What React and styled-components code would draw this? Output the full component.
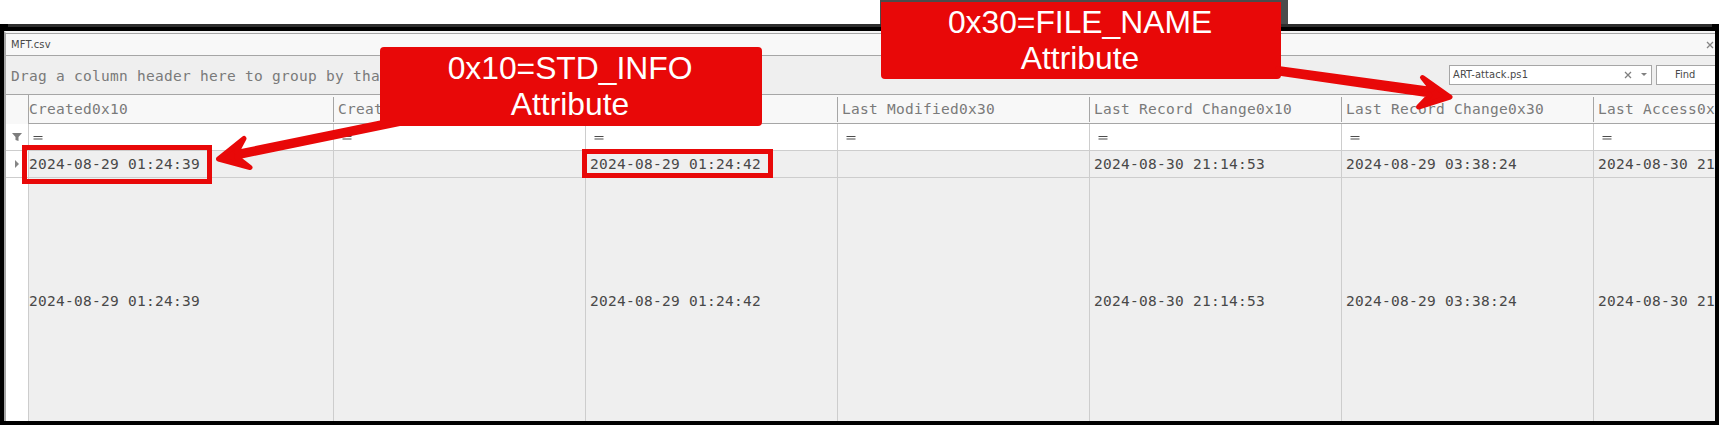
import React from "react";
import styled, { createGlobalStyle } from "styled-components";

const GlobalStyle = createGlobalStyle`
  * { box-sizing: border-box; }
  body { margin: 0; background: #fff; overflow: hidden; }
`;

const RED = "#e80808";
const MONO = `"DejaVu Sans Mono", "Liberation Mono", monospace`;
const UI = `"DejaVu Sans Condensed", "DejaVu Sans", sans-serif`;

const Stage = styled.main`
  position: relative;
  width: 1719px;
  height: 425px;
  padding-top: 24px;
  overflow: hidden;
`;

const Frame = styled.div`
  display: flex;
  flex-direction: column;
  height: 401px;
  padding: 0 4px 4px;
  background: #000;
`;

const FrameEdge = styled.div`
  flex: none;
  height: 3px;
  margin: 0 3px 4px 4px;
  background: #2e2e2e;
`;

const Window = styled.section`
  flex: 1;
  min-height: 0;
  display: flex;
  flex-direction: column;
  border-left: 2px solid #a6a6a6;
  border-top: 2px solid #f4f4f4;
  background: #fff;
  overflow: hidden;
`;

const TitleBar = styled.header`
  flex: none;
  display: flex;
  align-items: center;
  justify-content: space-between;
  height: 23px;
  padding: 0 1px 0 5px;
  border-top: 1px solid #a6a6a6;
  border-bottom: 1px solid #a6a6a6;
  background: #f8f8f8;
  color: #484848;
  font: 11px/20px ${UI};
  letter-spacing: 0.2px;
`;

const GroupPanel = styled.div`
  flex: none;
  display: flex;
  align-items: center;
  height: 39px;
  padding-left: 5px;
  border-bottom: 1px solid #a6a6a6;
  background: #efefef;
`;

const GroupHint = styled.span`
  flex: 1;
  color: #7a7a7a;
  font: 14.5px/20px ${MONO};
  letter-spacing: 0.27px;
  padding-top: 2px;
`;

const SearchBox = styled.div`
  display: flex;
  align-items: center;
  width: 203px;
  height: 20px;
  margin-right: 4px;
  padding: 0 4px 0 3px;
  border: 1px solid #a6a6a6;
  background: #fff;
  color: #484848;
  font: 11px/18px ${UI};
`;

const SearchValue = styled.span`
  flex: 1;
  letter-spacing: 0.12px;
`;

const FindButton = styled.button`
  width: 59px;
  height: 20px;
  padding: 0 0 0 18px;
  border: 1px solid #a6a6a6;
  border-right: 0;
  background: #fff;
  color: #484848;
  text-align: left;
  font: 11px/18px ${UI};
`;

const GridRow = styled.div`
  flex: none;
  display: grid;
  grid-template-columns: 23px 305px repeat(5, 252px) 252px;
  height: ${(p) => p.$height}px;
  border-bottom: ${(p) => (p.$line ? `1px solid ${p.$line}` : "0")};
  background: ${(p) => p.$bg};
`;

const Gutter = styled.div`
  display: flex;
  align-items: center;
  justify-content: center;
  border-right: 1px solid ${(p) => p.$line || "#cdcdcd"};
  background: ${(p) => p.$bg || "#fff"};
`;

const HeaderCell = styled.div`
  margin: 2px 0;
  padding-left: ${(p) => (p.$first ? 0 : 4)}px;
  border-right: 1px solid #a6a6a6;
  color: #7a7a7a;
  font: 14.5px/25px ${MONO};
  letter-spacing: 0.27px;
  white-space: nowrap;
`;

const FilterCell = styled.div`
  display: flex;
  align-items: center;
  padding: 1px 0 0 ${(p) => (p.$first ? 4 : 8)}px;
  border-right: 1px solid #cdcdcd;
`;

const DataCell = styled.div`
  display: flex;
  align-items: center;
  padding: ${(p) => (p.$detail ? 3 : 0)}px 0 0 ${(p) => (p.$first ? 0 : 4)}px;
  border-right: 1px solid #cdcdcd;
  color: #484848;
  font: 14.5px/20px ${MONO};
  letter-spacing: 0.27px;
  white-space: nowrap;
`;

const Highlight = styled.div`
  position: absolute;
  left: ${(p) => p.$x}px;
  top: ${(p) => p.$y}px;
  width: ${(p) => p.$w}px;
  height: ${(p) => p.$h}px;
  border: 5px solid ${RED};
`;

const Arrows = styled.svg`
  position: absolute;
  left: 0;
  top: 0;
  fill: ${RED};
  stroke: ${RED};
  stroke-width: 5;
  stroke-linejoin: round;
`;

const CalloutBacking = styled.div`
  position: absolute;
  left: 880px;
  top: 0;
  width: 408px;
  height: 24px;
  background: #4b4b4b;
`;

const Callout = styled.div`
  position: absolute;
  left: ${(p) => p.$x}px;
  top: ${(p) => p.$y}px;
  width: ${(p) => p.$w}px;
  height: ${(p) => p.$h}px;
  padding: ${(p) => p.$pad}px 2px 0 0;
  border-radius: ${(p) => p.$radius};
  background: ${RED};
  color: #fff;
  text-align: center;
  font: 31.8px/36px "Liberation Sans", Arial, sans-serif;
`;

const CloseIcon = ({ size, color }) => (
  <svg width={size} height={size} viewBox="0 0 8 8" stroke={color} strokeWidth="1.3">
    <path d="M1 1l6 6M7 1L1 7" />
  </svg>
);

const DropIcon = styled.svg`
  margin-left: 9px;
`;

const EqualsIcon = () => (
  <svg width="10" height="4" viewBox="0 0 10 4" fill="#4c4c4c">
    <path d="M0.500 0h9v1h-9zM0.500 2.500h9v1h-9z" />
  </svg>
);

const FilterIcon = () => (
  <svg width="10" height="10" viewBox="0 0 10 10" fill="#7d7d7d">
    <path d="M0 1h10L6.500 5v4L3.500 8V5z" />
  </svg>
);

const RowMarker = () => (
  <svg width="10" height="8" viewBox="0 0 10 8" fill="#858585">
    <path d="M3 0v8l4-4z" />
  </svg>
);

const columns = [
  { title: "Created0x10", value: "2024-08-29 01:24:39" },
  { title: "Created0x30", value: "" },
  { title: "Last Modified0x10", value: "2024-08-29 01:24:42" },
  { title: "Last Modified0x30", value: "" },
  { title: "Last Record Change0x10", value: "2024-08-30 21:14:53" },
  { title: "Last Record Change0x30", value: "2024-08-29 03:38:24" },
  { title: "Last Access0x10", value: "2024-08-30 21:14:53" },
];

export default function App() {
  return (
    <Stage>
      <GlobalStyle />
      <Frame>
        <FrameEdge />
        <Window>
          <TitleBar>
            MFT.csv
            <CloseIcon size={8} color="#858585" />
          </TitleBar>
          <GroupPanel>
            <GroupHint>Drag a column header here to group by that column</GroupHint>
            <SearchBox>
              <SearchValue>ART-attack.ps1</SearchValue>
              <CloseIcon size={8} color="#808080" />
              <DropIcon width="6" height="4" viewBox="0 0 6 4" fill="#808080">
                <path d="M0 0h6L3 3z" />
              </DropIcon>
            </SearchBox>
            <FindButton>Find</FindButton>
          </GroupPanel>
          <GridRow $height={29} $line="#a6a6a6" $bg="#f8f8f8">
            <Gutter $line="#a6a6a6" $bg="#f8f8f8" />
            {columns.map((c, i) => (
              <HeaderCell key={c.title} $first={i === 0}>{c.title}</HeaderCell>
            ))}
          </GridRow>
          <GridRow $height={27} $line="#cdcdcd" $bg="#fff">
            <Gutter><FilterIcon /></Gutter>
            {columns.map((c, i) => (
              <FilterCell key={c.title} $first={i === 0}><EqualsIcon /></FilterCell>
            ))}
          </GridRow>
          <GridRow $height={27} $line="#cdcdcd" $bg="#efefef">
            <Gutter><RowMarker /></Gutter>
            {columns.map((c, i) => (
              <DataCell key={c.title} $first={i === 0}>{c.value}</DataCell>
            ))}
          </GridRow>
          <GridRow $height={243} $bg="#efefef">
            <Gutter />
            {columns.map((c, i) => (
              <DataCell key={c.title} $first={i === 0} $detail>{c.value}</DataCell>
            ))}
          </GridRow>
        </Window>
      </Frame>
      <Highlight $x={22} $y={145} $w={190} $h={39} />
      <Highlight $x={582} $y={149} $w={191} $h={29} />
      <CalloutBacking />
      <Callout $x={380} $y={47} $w={382} $h={79} $pad={3} $radius="4px">
        0x10=STD_INFO<br />Attribute
      </Callout>
      <Callout $x={881} $y={2} $w={400} $h={77} $pad={2} $radius="0 0 4px 4px">
        0x30=FILE_NAME<br />Attribute
      </Callout>
      <Arrows width="1719" height="425" viewBox="0 0 1719 425">
        <path d="M218.500 159L244 138.500L236.500 152.500L383 122.500L402 123L236.500 157L250 167.500Z" />
        <path d="M1278 68.500L1432 89.500L1422.500 77.500L1450 97L1418.500 107L1430 95L1278 73Z" />
      </Arrows>
    </Stage>
  );
}
